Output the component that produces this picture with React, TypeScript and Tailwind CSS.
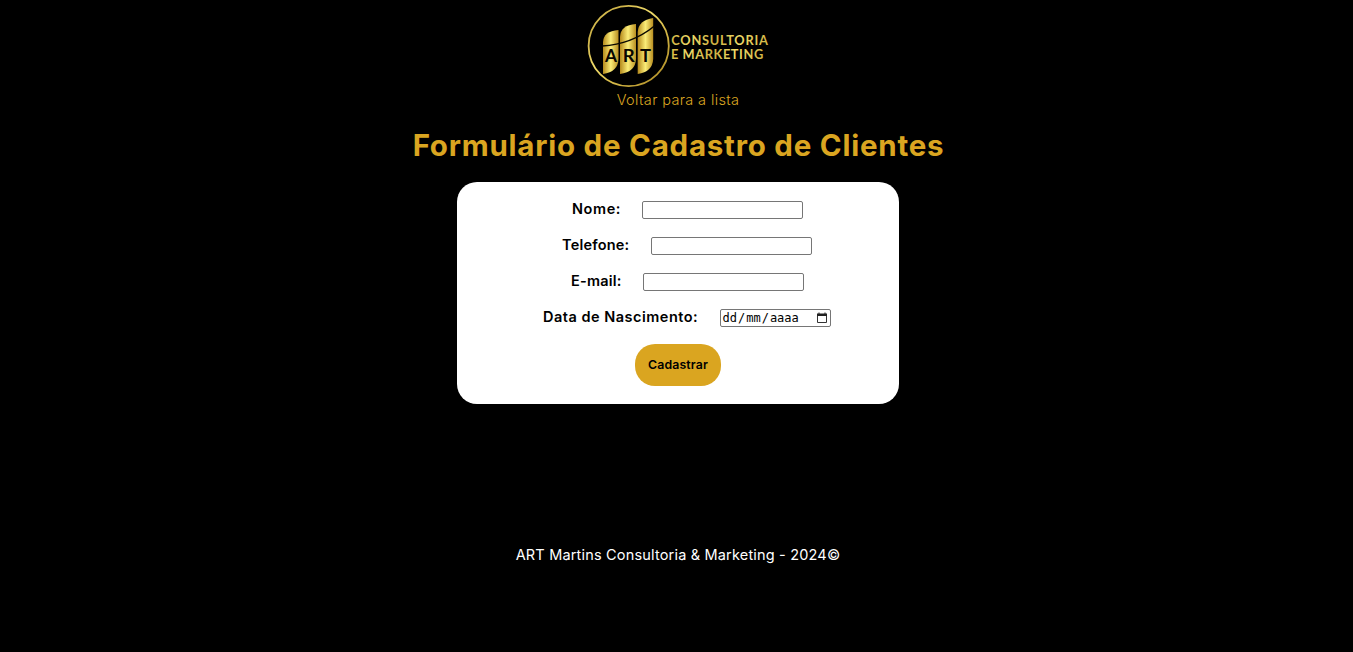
import type { ReactNode } from "react";

function Logo() {
  return (
    <svg width="184" height="88" viewBox="586 2 184 88" className="block font-['Lato',sans-serif]" role="img" aria-label="ART Consultoria e Marketing">
      <defs>
        <linearGradient id="goldRing" x1="0" y1="0" x2="1" y2="1">
          <stop offset="0" stopColor="#e2cc5c" />
          <stop offset=".2" stopColor="#cdb248" />
          <stop offset=".42" stopColor="#f0dc6c" />
          <stop offset=".6" stopColor="#d8bd4c" />
          <stop offset="1" stopColor="#a8841e" />
        </linearGradient>
        <linearGradient id="goldBar" x1="0" y1="0" x2="1" y2="0">
          <stop offset="0" stopColor="#b58a1c" />
          <stop offset=".5" stopColor="#fbed78" />
          <stop offset="1" stopColor="#b88e20" />
        </linearGradient>
        <linearGradient id="goldText" x1="0" y1="0" x2="1" y2="0">
          <stop offset="0" stopColor="#d4b644" />
          <stop offset=".2" stopColor="#efdc6a" />
          <stop offset=".45" stopColor="#ccae40" />
          <stop offset=".7" stopColor="#efdc6a" />
          <stop offset="1" stopColor="#d4b644" />
        </linearGradient>
      </defs>
      <circle cx="628.7" cy="46" r="40.1" fill="none" stroke="url(#goldRing)" strokeWidth="1.8" />
      <path d="M603 74V42Q603.500 31 618.500 30V59Q618 72 603 74Z" fill="url(#goldBar)" />
      <path d="M620 74V37Q620.500 25 636 24V59Q635.500 72 620 74Z" fill="url(#goldBar)" />
      <path d="M637.700 74V32Q638.500 20 653.200 18V59Q652.500 72 637.700 74Z" fill="url(#goldBar)" />
      <path d="M602 46C620 45 639 38.500 654.500 26" fill="none" stroke="#0a0800" strokeWidth="1.600" />
      <g fill="#080600" fontSize="16.500" fontWeight={700}>
        <text x="605" y="62.300" textLength="12" lengthAdjust="spacingAndGlyphs">A</text>
        <text x="622.700" y="62.300" textLength="12" lengthAdjust="spacingAndGlyphs">R</text>
        <text x="640" y="62.300" textLength="11" lengthAdjust="spacingAndGlyphs">T</text>
      </g>
      <g fill="url(#goldText)" fontSize="12.800" fontWeight={700}>
        <text x="671.300" y="44.900" textLength="96.500" lengthAdjust="spacing">CONSULTORIA</text>
        <text x="671" y="58.700" textLength="92.200" lengthAdjust="spacing">E MARKETING</text>
      </g>
    </svg>
  );
}

function Field({ id, label, labelClass, children }: { id: string; label: string; labelClass: string; children: ReactNode }) {
  return (
    <div className="flex h-[18px] items-start justify-center gap-[22px] pl-[18px]">
      <label htmlFor={id} className={`block text-[14.5px] leading-[16px] font-semibold whitespace-nowrap ${labelClass}`}>
        {label}
      </label>
      {children}
    </div>
  );
}

const box = "block h-[18px] rounded-[2px] border border-[#767676] bg-white";

export default function App() {
  return (
    <main className="flex h-[652px] w-full flex-col items-center bg-black pt-[2px] pl-[3px] font-['Inter',sans-serif] text-black">
      <Logo />
      <a href="#" className="mt-[1px] h-[18px] text-[14.5px] leading-[18px] font-[350] tracking-[0.37px] whitespace-nowrap text-[#daa520]">
        Voltar para a lista
      </a>
      <h1 className="mt-[18px] h-[37px] pl-[1px] text-[29.5px] leading-[37px] font-bold tracking-[0.77px] whitespace-nowrap text-[#daa520]">
        Formulário de Cadastro de Clientes
      </h1>
      <form className="mt-[18px] flex h-[222px] w-[442px] flex-col items-center rounded-[20px] bg-white pt-[19px]">
        <div className="flex flex-col items-center gap-[18px]">
          <Field id="nome" label="Nome:" labelClass="w-[49px] pl-[1px] tracking-[0.6px]">
            <input id="nome" type="text" className={`${box} w-[161px]`} />
          </Field>
          <Field id="telefone" label="Telefone:" labelClass="w-[67px] tracking-[0.2px]">
            <input id="telefone" type="text" className={`${box} w-[161px]`} />
          </Field>
          <Field id="email" label="E-mail:" labelClass="w-[51px] pl-[1px] tracking-[0.2px]">
            <input id="email" type="text" className={`${box} w-[161px]`} />
          </Field>
          <Field id="nascimento" label="Data de Nascimento:" labelClass="w-[155px] tracking-[0.5px]">
            <div id="nascimento" className={`${box} flex w-[111px] items-center justify-between pr-[2px] pl-[1.5px]`}>
              <span className="flex font-['DejaVu_Sans_Mono',monospace] text-[12px] leading-[16px]">
                <span className="pr-px">dd</span>/<span className="px-px">mm</span>/<span className="pl-px">aaaa</span>
              </span>
              <svg width="12" height="12" viewBox="0 0 12 12" className="block">
                <path d="M1.500 2.500h9v8h-9z" fill="none" stroke="#333" strokeWidth="1" />
                <path d="M1 1.500h10v2.500H1zM2.500 .5h1v1h-1zM8.500 .5h1v1h-1z" fill="#222" />
              </svg>
            </div>
          </Field>
        </div>
        <button type="button" className="mt-[17px] h-[42px] w-[86px] rounded-[20px] bg-[#daa520] text-[12.3px] font-semibold tracking-[0.15px]">
          Cadastrar
        </button>
      </form>
      <footer className="mt-[140px] text-[14.5px] leading-[21px] tracking-[0.18px] whitespace-nowrap text-white">
        ART Martins Consultoria &amp; Marketing - 2024©
      </footer>
    </main>
  );
}
